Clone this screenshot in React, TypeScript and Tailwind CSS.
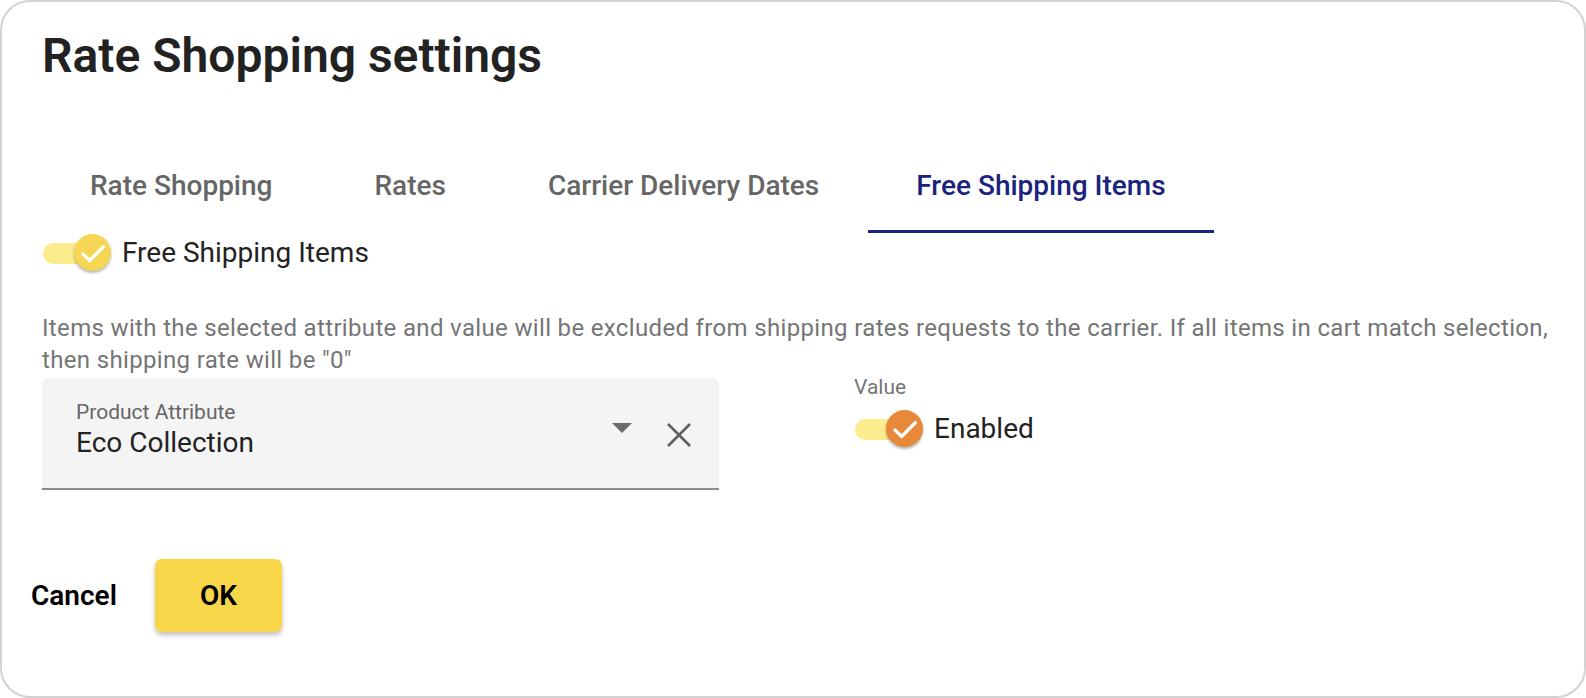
import React from 'react';

const Toggle = ({ thumb }: { thumb: string }) => {
  return (
    <div className="relative w-[69px] h-[40px] flex items-center shrink-0">
      <div className="ml-[1px] w-[60px] h-[21px] rounded-full bg-[#fbec8e]" />
      <div
        className={`absolute left-[32px] top-[1px] w-[37px] h-[37px] rounded-full flex items-center justify-center shadow-[0_2px_3px_rgba(0,0,0,0.3)] ${thumb}`}
      >
        <svg width="30" height="30" viewBox="0 0 24 24" fill="none">
          <path d="M4 12.8l5.3 5.2L20.2 7" stroke="white" strokeWidth="2.6" strokeLinecap="round" strokeLinejoin="round" />
        </svg>
      </div>
    </div>
  );
};

const tabs = [
  { label: 'Rate Shopping', ml: 'ml-0' },
  { label: 'Rates', ml: 'ml-[6px]' },
  { label: 'Carrier Delivery Dates', ml: 'ml-[6px]' },
  { label: 'Free Shipping Items', ml: 'ml-[1px]' },
];

const App = () => {
  return (
    <div className="w-[1586px] h-[698px] bg-white font-['Roboto',sans-serif]">
      <div className="w-full h-full rounded-[30px] border-2 border-[#d2d2d2] bg-white px-[40px] pt-[24px]">
        <h1 className="text-[48px] leading-[60px] font-semibold text-[#222222]">Rate Shopping settings</h1>

        {/* tabs */}
        <div className="flex mt-[69px]">
          {tabs.map((t, i) => {
            const active = i === tabs.length - 1;
            return (
              <div
                key={t.label}
                className={`${t.ml} px-[48px] h-[78px] pb-[13px] flex items-center text-[28px] font-medium border-b-[3px] ${
                  active ? 'text-[#1a237e] border-[#1a237e]' : 'text-[#666666] border-transparent'
                }`}
              >
                {t.label}
              </div>
            );
          })}
        </div>

        <div className="flex items-center gap-[11px]">
          <Toggle thumb="bg-[#f5d655]" />
          <span className="text-[28px] leading-[40px] text-[#222222]">Free Shipping Items</span>
        </div>

        <p className="mt-[40px] -mr-[24px] text-[24px] leading-[31.5px] tracking-[0.34px] text-[#757575]">
          Items with the selected attribute and value will be excluded from shipping rates requests to the carrier. If all items in cart match selection,
          then shipping rate will be "0"
        </p>

        <div className="flex mt-[2px]">
          <div className="w-[677px] h-[112px] bg-[#f4f4f4] rounded-t-[6px] border-b-2 border-[#8c8c8c] flex items-start pl-[34px] pr-[27px] pt-[22px]">
            <div className="flex-1">
              <div className="text-[21px] leading-[24px] text-[#666666]">Product Attribute</div>
              <div className="mt-[2px] text-[28px] leading-[34px] text-[#222222]">Eco Collection</div>
            </div>
            <svg width="20" height="10" viewBox="0 0 20 10" className="mr-[34px] mt-[23px]">
              <path d="M0 0h20L10 10z" fill="#6b6b6b" />
            </svg>
            <svg width="26" height="26" viewBox="0 0 26 26" className="mt-[22px]">
              <path d="M2 2l22 22M24 2L2 24" stroke="#5f5f5f" strokeWidth="2.6" />
            </svg>
          </div>

          <div className="ml-[135px] -mt-[2px]">
            <div className="text-[21px] leading-[22px] text-[#757575]">Value</div>
            <div className="flex items-center gap-[11px] mt-[11px]">
              <Toggle thumb="bg-[#e8893a]" />
              <span className="text-[28px] leading-[40px] text-[#222222]">Enabled</span>
            </div>
          </div>
        </div>

        <div className="flex items-center mt-[69px] -ml-[11px]">
          <button className="text-[28px] font-semibold text-black">Cancel</button>
          <button className="ml-[38px] w-[127px] h-[73px] rounded-[7px] bg-[#f7d64a] text-[28px] font-semibold text-black shadow-[0_3px_5px_rgba(0,0,0,0.25)]">
            OK
          </button>
        </div>
      </div>
    </div>
  );
};

export default App;
